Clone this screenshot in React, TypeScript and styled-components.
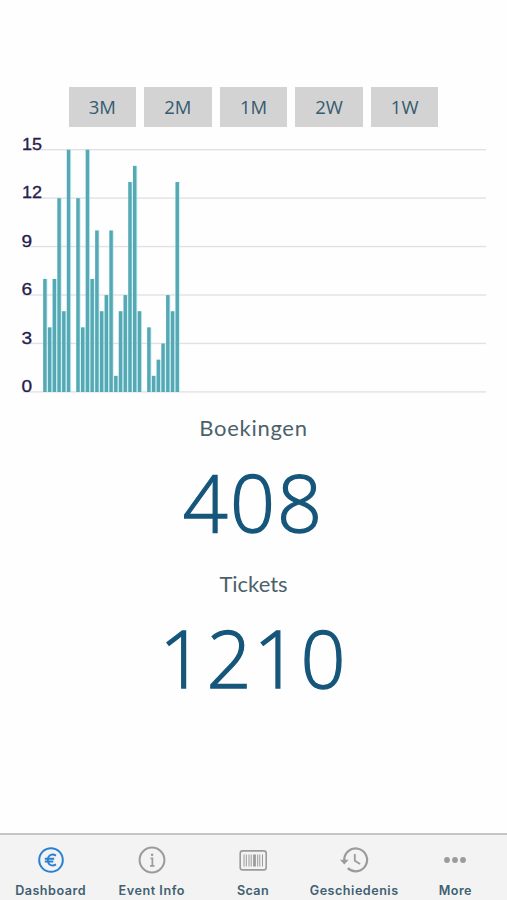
import React from "react";
import styled, { createGlobalStyle } from "styled-components";

const GlobalStyle = createGlobalStyle`
  * { box-sizing: border-box; }
  body { margin: 0; background: #fefefe; }
`;

const Screen = styled.div`
  display: flex;
  flex-direction: column;
  width: 507px;
  height: 900px;
  overflow: hidden;
  background: #fefefe;
`;

const Main = styled.main`
  flex: 1;
  padding-top: 87px;
`;

const RangeBar = styled.div`
  display: flex;
  justify-content: center;
  gap: 8px;
`;

const RangeButton = styled.button`
  width: 67.6px;
  height: 40px;
  padding: 0;
  border: 0;
  background: #d3d3d3;
  color: #365b70;
  font: 400 18.5px/40px "Open Sans", sans-serif;
`;

const Chart = styled.svg`
  display: block;
  width: 507px;
  height: 275px;
`;

const AxisLabel = styled.text`
  fill: #25204a;
  stroke: #25204a;
  stroke-width: 0.3px;
  font: 400 16px "Liberation Sans", sans-serif;
`;

const Stats = styled.section`
  display: flex;
  flex-direction: column;
  align-items: center;
`;

const StatLabel = styled.div<{ $spacing: number }>`
  height: 52px;
  line-height: 52px;
  color: #4c626b;
  font-family: Lato, sans-serif;
  font-size: 22px;
  letter-spacing: ${(p) => p.$spacing}px;
`;

const StatValue = styled.div`
  height: 104px;
  line-height: 95px;
  color: #15567a;
  font-family: "Open Sans", sans-serif;
  font-size: 79px;
  font-weight: 300;
  letter-spacing: 2px;
  -webkit-text-stroke: 1.3px #15567a;
`;

const TabBar = styled.nav`
  display: grid;
  grid-template-columns: repeat(5, 101.2px);
  height: 67px;
  border-top: 2px solid #c4c4c4;
  background: #f3f3f3;
`;

const Tab = styled.div<{ $active?: boolean }>`
  display: flex;
  flex-direction: column;
  align-items: center;
  padding-top: 9px;
  color: ${(p) => (p.$active ? "#2980d2" : "#9b9b9b")};
`;

const TabIcon = styled.svg`
  display: block;
  width: 32px;
  height: 32px;
  fill: none;
  stroke: currentColor;
  stroke-width: 2;
`;

const TabLabel = styled.span<{ $spacing: number }>`
  margin-top: 6px;
  color: #416071;
  font: 600 12.6px/17px Inter, sans-serif;
  letter-spacing: ${(p) => p.$spacing}px;
  white-space: nowrap;
`;

const ranges = ["3M", "2M", "1M", "2W", "1W"];
const bookings = [7, 4, 7, 12, 5, 15, 0, 12, 4, 15, 7, 10, 5, 6, 10, 1, 5, 6, 13, 14, 5, 0, 4, 1, 2, 3, 6, 5, 13];
const ticks = [15, 12, 9, 6, 3, 0];
const UNIT = 16.15;
const BASE = 265;

function BookingsChart() {
  return (
    <Chart viewBox="0 0 507 275">
      {ticks.map((t) => (
        <rect key={t} x="23" y={BASE - t * UNIT - 0.8} width="463" height="1.4" fill="#dfe1e4" />
      ))}
      {bookings.map((v, i) => (
        <g key={i}>
          <rect x={43 + i * 4.727} y={BASE - v * UNIT} width="4.5" height={v * UNIT} fill="#a9e5e9" opacity="0.65" />
          <rect x={43.2 + i * 4.727} y={BASE - v * UNIT} width="3.4" height={v * UNIT} fill="#55a8b4" />
        </g>
      ))}
      {ticks.map((t) => (
        <AxisLabel
          key={t}
          x={t > 9 ? 22 : 21.5}
          y={BASE - t * UNIT + 0.2}
          textLength={t > 9 ? 20 : 10.6}
          lengthAdjust="spacingAndGlyphs"
        >
          {t}
        </AxisLabel>
      ))}
    </Chart>
  );
}

const EuroIcon = () => (
  <TabIcon viewBox="0 0 32 32">
    <circle cx="16" cy="16" r="11.8" />
    <path d="M21 11.6c-3.8-2.5-8.2-.6-8.2 4.4s4.4 6.9 8.2 4.4M9.8 14.7h9.4M9.8 17.5h8.5" strokeWidth="1.9" />
  </TabIcon>
);

const InfoIcon = () => (
  <TabIcon viewBox="0 0 32 32">
    <circle cx="16" cy="16" r="12.4" />
    <path d="M14.5 14.3h1.9v7.4M14 21.8h4.5" strokeWidth="1.7" />
    <circle cx="16.1" cy="10.8" r="1.3" fill="currentColor" stroke="none" />
  </TabIcon>
);

const BarcodeIcon = () => (
  <TabIcon viewBox="0 0 32 32">
    <rect x="3.2" y="6.9" width="26" height="19" rx="2.5" strokeWidth="1.6" />
    <path
      d="M7 10.5v12M9.3 10.5v12M12 10.5v12M14.2 10.5v12M20.7 10.5v12M22.8 10.5v12M25.5 10.5v12"
      strokeWidth="1"
    />
    <path d="M17.5 10.5v12" strokeWidth="2.8" />
  </TabIcon>
);

const HistoryIcon = () => (
  <TabIcon viewBox="0 0 32 32">
    <path d="M6.3 16.5A11.4 11.4 0 1 1 9.8 24.1" strokeWidth="2.2" />
    <path d="M2 15.7h8.6l-4.3 4.9z" fill="currentColor" stroke="none" />
    <path d="M16.8 10v6.8l5.3 3.2" strokeWidth="1.8" />
  </TabIcon>
);

const MoreIcon = () => (
  <TabIcon viewBox="0 0 32 32">
    <g fill="currentColor" stroke="none">
      <circle cx="8" cy="16" r="2.9" />
      <circle cx="16" cy="16" r="2.9" />
      <circle cx="24" cy="16" r="2.9" />
    </g>
  </TabIcon>
);

const tabs = [
  { label: "Dashboard", Icon: EuroIcon, active: true, spacing: 0.5 },
  { label: "Event Info", Icon: InfoIcon, spacing: 0.55 },
  { label: "Scan", Icon: BarcodeIcon, spacing: 0.4 },
  { label: "Geschiedenis", Icon: HistoryIcon, spacing: 0.5 },
  { label: "More", Icon: MoreIcon, spacing: 0.4 },
];

export default function App() {
  return (
    <>
      <GlobalStyle />
      <Screen>
        <Main>
          <RangeBar>
            {ranges.map((r) => (
              <RangeButton key={r}>{r}</RangeButton>
            ))}
          </RangeBar>
          <BookingsChart />
          <Stats>
            <StatLabel $spacing={0.7}>Boekingen</StatLabel>
            <StatValue>408</StatValue>
            <StatLabel $spacing={0}>Tickets</StatLabel>
            <StatValue>1210</StatValue>
          </Stats>
        </Main>
        <TabBar>
          {tabs.map(({ label, Icon, active, spacing }) => (
            <Tab key={label} $active={active}>
              <Icon />
              <TabLabel $spacing={spacing}>{label}</TabLabel>
            </Tab>
          ))}
        </TabBar>
      </Screen>
    </>
  );
}
